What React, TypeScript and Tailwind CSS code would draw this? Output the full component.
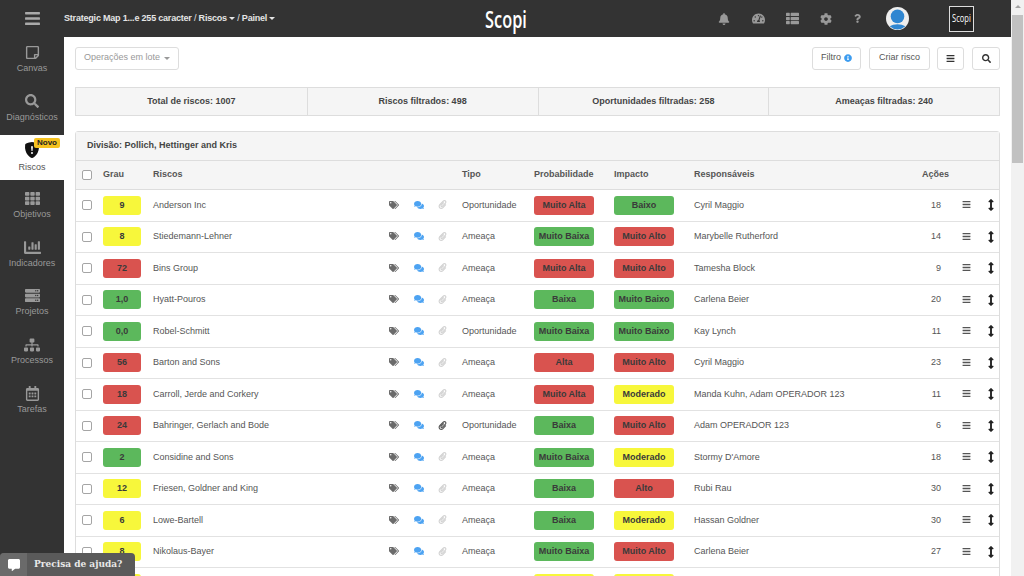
import type { ReactNode } from "react";
import { FaArrowsAltV, FaBars, FaBell, FaChartBar, FaCog, FaCommentAlt, FaComments, FaInfoCircle, FaPaperclip, FaQuestion, FaRegCalendarAlt, FaRegStickyNote, FaSearch, FaServer, FaSitemap, FaTachometerAlt, FaTags, FaTh, FaThList } from "react-icons/fa";
import { BsShieldFillExclamation } from "react-icons/bs";

type Level = "red" | "green" | "yellow";

const levelClass: Record<Level, string> = {
  red: "bg-[#d9534f]",
  green: "bg-[#5cb85c]",
  yellow: "bg-[#f7f73b]",
};

type Row = {
  grau: string;
  grauLevel: Level;
  nome: string;
  tipo: string;
  prob: [string, Level];
  imp: [string, Level];
  resp: string;
  acoes: number;
  clip?: boolean;
};

const rows: Row[] = [
  { grau: "9", grauLevel: "yellow", nome: "Anderson Inc", tipo: "Oportunidade", prob: ["Muito Alta", "red"], imp: ["Baixo", "green"], resp: "Cyril Maggio", acoes: 18 },
  { grau: "8", grauLevel: "yellow", nome: "Stiedemann-Lehner", tipo: "Ameaça", prob: ["Muito Baixa", "green"], imp: ["Muito Alto", "red"], resp: "Marybelle Rutherford", acoes: 14 },
  { grau: "72", grauLevel: "red", nome: "Bins Group", tipo: "Ameaça", prob: ["Muito Alta", "red"], imp: ["Muito Alto", "red"], resp: "Tamesha Block", acoes: 9 },
  { grau: "1,0", grauLevel: "green", nome: "Hyatt-Pouros", tipo: "Ameaça", prob: ["Baixa", "green"], imp: ["Muito Baixo", "green"], resp: "Carlena Beier", acoes: 20 },
  { grau: "0,0", grauLevel: "green", nome: "Robel-Schmitt", tipo: "Oportunidade", prob: ["Muito Baixa", "green"], imp: ["Muito Baixo", "green"], resp: "Kay Lynch", acoes: 11 },
  { grau: "56", grauLevel: "red", nome: "Barton and Sons", tipo: "Ameaça", prob: ["Alta", "red"], imp: ["Muito Alto", "red"], resp: "Cyril Maggio", acoes: 23 },
  { grau: "18", grauLevel: "red", nome: "Carroll, Jerde and Corkery", tipo: "Ameaça", prob: ["Muito Alta", "red"], imp: ["Moderado", "yellow"], resp: "Manda Kuhn, Adam OPERADOR 123", acoes: 11 },
  { grau: "24", grauLevel: "red", nome: "Bahringer, Gerlach and Bode", tipo: "Oportunidade", prob: ["Baixa", "green"], imp: ["Muito Alto", "red"], resp: "Adam OPERADOR 123", acoes: 6, clip: true },
  { grau: "2", grauLevel: "green", nome: "Considine and Sons", tipo: "Ameaça", prob: ["Muito Baixa", "green"], imp: ["Moderado", "yellow"], resp: "Stormy D'Amore", acoes: 18 },
  { grau: "12", grauLevel: "yellow", nome: "Friesen, Goldner and King", tipo: "Ameaça", prob: ["Baixa", "green"], imp: ["Alto", "red"], resp: "Rubi Rau", acoes: 30 },
  { grau: "6", grauLevel: "yellow", nome: "Lowe-Bartell", tipo: "Ameaça", prob: ["Baixa", "green"], imp: ["Moderado", "yellow"], resp: "Hassan Goldner", acoes: 30 },
  { grau: "8", grauLevel: "yellow", nome: "Nikolaus-Bayer", tipo: "Ameaça", prob: ["Muito Baixa", "green"], imp: ["Muito Alto", "red"], resp: "Carlena Beier", acoes: 27 },
];

const navItems = [
  { label: "Canvas", icon: <FaRegStickyNote className="size-[15px]" /> },
  { label: "Diagnósticos", icon: <FaSearch className="size-[14px]" /> },
  { label: "Riscos", icon: <BsShieldFillExclamation className="size-[16px] text-[#111]" />, active: true },
  { label: "Objetivos", icon: <FaTh className="size-[15px]" /> },
  { label: "Indicadores", icon: <FaChartBar className="size-[17px]" /> },
  { label: "Projetos", icon: <FaServer className="size-[15px]" /> },
  { label: "Processos", icon: <FaSitemap className="size-[16px]" /> },
  { label: "Tarefas", icon: <FaRegCalendarAlt className="size-[15px]" /> },
];

const rowGrid = "grid grid-cols-[27px_50px_232px_77px_72px_80px_80px_226px_30px_32px_1fr] items-center";

function Caret({ className = "ml-1" }: { className?: string }) {
  return <span className={`inline-block border-x-[3px] border-t-[3px] border-x-transparent border-t-current align-middle ${className}`} />;
}

function Checkbox() {
  return (
    <div className="pl-[6px]">
      <span className="block size-[10px] rounded-[2px] border border-[#a5a5a5] bg-white" />
    </div>
  );
}

function Pill({ text, level }: { text: string; level: Level }) {
  return (
    <span className={`flex h-[19px] w-[60px] items-center justify-center rounded-[3px] font-bold text-[#3a3a3a] ${levelClass[level]}`}>
      {text}
    </span>
  );
}

function Button({ children, className = "" }: { children: ReactNode; className?: string }) {
  return (
    <span className={`flex h-[23px] items-center justify-center rounded-[3px] border border-[#ddd] bg-white text-[#555] ${className}`}>
      {children}
    </span>
  );
}

export default function App() {
  return (
    <div className="relative flex h-[576px] w-[1024px] overflow-hidden bg-white font-['Liberation_Sans',Arial,sans-serif] text-[9px] text-[#555]">
      <div className="flex w-[1011px] flex-col">
        <header className="flex h-[37px] shrink-0 items-center bg-[#333]">
          <div className="flex w-[64px] justify-center">
            <FaBars className="size-[17px] text-[#aaa]" />
          </div>
          <div className="w-[364px] whitespace-nowrap font-bold tracking-[-0.2px] text-[#e5e5e5]">
            Strategic Map 1...e 255 caracter <span className="font-normal">/</span> Riscos<Caret className="ml-[2px]" /> <span className="font-normal">/</span> Painel<Caret className="ml-[2px]" />
          </div>
          <div className="w-[156px] text-center font-['Open_Sans',sans-serif] text-[24px] font-semibold leading-none text-white [transform:scaleX(0.68)]">Scopi</div>
          <div className="flex items-center text-[#999]">
            <FaBell className="ml-[134px] size-[12px]" />
            <FaTachometerAlt className="ml-[22px] size-[13px]" />
            <FaThList className="ml-[21px] size-[13px]" />
            <FaCog className="ml-[21px] size-[12px]" />
            <FaQuestion className="ml-[21px] size-[9px]" />
            <svg className="ml-[24px] size-[23px]" viewBox="0 0 22 22">
              <circle cx="11" cy="11" r="11" fill="#eee" />
              <circle cx="11" cy="9" r="6.5" fill="#2f86d1" />
              <path d="M3.5 18.5 a10 6 0 0 1 15 0 A11 11 0 0 1 3.5 18.5z" fill="#2f86d1" />
            </svg>
            <span className="ml-[40px] flex h-[26px] w-[25px] items-center justify-center border border-[#ddd] bg-[#222] font-['Open_Sans',sans-serif] text-[10px] text-white">
              <span className="[transform:scaleX(0.75)]">Scopi</span>
            </span>
          </div>
        </header>
        <div className="flex min-h-0 flex-1">
          <nav className="flex w-[64px] shrink-0 flex-col bg-[#333]">
            {navItems.map((n) => (
              <div
                key={n.label}
                className={
                  n.active
                    ? "relative mb-[3px] mt-[1px] flex h-[44.7px] flex-col items-center whitespace-nowrap bg-white pt-[7px] text-[#555]"
                    : "relative flex h-[48.7px] flex-col items-center whitespace-nowrap pt-[8px] text-[#999]"
                }
              >
                <div className="flex h-[15px] items-center">{n.icon}</div>
                <span className={n.active ? "mt-[4px]" : "mt-[2px]"}>{n.label}</span>
                {n.active && (
                  <span className="absolute left-[34px] top-[3px] rounded-[2px] bg-[#f5c21f] px-[3px] text-[8px] font-bold leading-[10px] text-[#222]">Novo</span>
                )}
              </div>
            ))}
          </nav>
          <main className="min-w-0 flex-1 overflow-hidden pl-[11px] pr-[11px] pt-[9.5px]">
            <div className="flex items-center gap-[8px]">
              <Button className="mr-auto w-[104px] text-[#999]">
                Operações em lote<Caret />
              </Button>
              <Button className="w-[49px]">
                Filtro
                <FaInfoCircle className="ml-[3px] size-[8px] text-[#3c9cf0]" />
              </Button>
              <Button className="w-[61px]">Criar risco</Button>
              <Button className="ml-[-1px] w-[27px]">
                <FaBars className="size-[9px] text-[#333]" />
              </Button>
              <Button className="w-[28px]">
                <FaSearch className="size-[9px] text-[#333]" />
              </Button>
            </div>
            <div className="mt-[17.5px] grid h-[29px] grid-cols-4 border border-[#ddd] bg-[#f5f5f5] font-bold text-[#444]">
              {["Total de riscos: 1007", "Riscos filtrados: 498", "Oportunidades filtradas: 258", "Ameaças filtradas: 240"].map((t, i) => (
                <div key={t} className={`flex items-center justify-center ${i > 0 ? "border-l border-[#ddd]" : ""}`}>
                  {t}
                </div>
              ))}
            </div>
            <section className="mt-[15px] rounded-t-[3px] border border-[#ddd]">
              <div className="flex h-[28px] items-center bg-[#f5f5f5] pb-[1px] pl-[11px] font-bold text-[#444]">Divisão: Pollich, Hettinger and Kris</div>
              <div className={`${rowGrid} h-[30px] border-y border-[#ddd] bg-[#f5f5f5] font-bold text-[#555]`}>
                <Checkbox />
                <div>Grau</div>
                <div>Riscos</div>
                <div />
                <div>Tipo</div>
                <div>Probabilidade</div>
                <div>Impacto</div>
                <div>Responsáveis</div>
                <div className="col-span-2 whitespace-nowrap pl-[2px]">Ações</div>
                <div />
              </div>
              {rows.map((r, i) => (
                <div key={i} className={`${rowGrid} h-[31.5px] border-b border-[#e2e2e2]`}>
                  <Checkbox />
                  <span className={`flex h-[19px] w-[38px] items-center justify-center rounded-[3px] font-bold text-[#3a3a3a] ${levelClass[r.grauLevel]}`}>{r.grau}</span>
                  <div className="whitespace-nowrap">{r.nome}</div>
                  <div className="flex items-center pb-[1px] pl-[4px]">
                    <FaTags className="size-[10px] text-[#6b6b6b]" />
                    <FaComments className="ml-[15px] size-[10px] text-[#4da3f2]" />
                    <FaPaperclip className={`ml-[14px] size-[9px] ${r.clip ? "text-[#555]" : "text-[#d2d2d2]"}`} />
                  </div>
                  <div>{r.tipo}</div>
                  <Pill text={r.prob[0]} level={r.prob[1]} />
                  <Pill text={r.imp[0]} level={r.imp[1]} />
                  <div className="whitespace-nowrap">{r.resp}</div>
                  <div className="pr-[9px] text-right">{r.acoes}</div>
                  <div className="flex justify-center pb-[1px]"><FaBars className="size-[9px] text-[#555]" /></div>
                  <div className="flex justify-center"><FaArrowsAltV className="size-[12px] text-[#222]" /></div>
                </div>
              ))}
              <div className={`${rowGrid} h-[31.5px]`}>
                <Checkbox />
                <span className={`h-[19px] w-[38px] rounded-[3px] ${levelClass.yellow}`} />
                <div />
                <div />
                <div />
                <span className={`h-[19px] w-[60px] rounded-[3px] ${levelClass.yellow}`} />
                <span className={`h-[19px] w-[60px] rounded-[3px] ${levelClass.yellow}`} />
              </div>
            </section>
          </main>
        </div>
      </div>
      <div className="flex w-[13px] shrink-0 flex-col items-center bg-[#f1f1f1]">
        <div className="flex h-[13px] items-center justify-center">
          <span className="border-x-[3px] border-b-[3px] border-x-transparent border-b-[#a3a3a3]" />
        </div>
        <div className="mt-[2px] h-[148px] w-[11px] bg-[#c1c1c1]" />
      </div>
      <div className="absolute bottom-0 left-0 flex h-[23px] w-[135px] items-center overflow-hidden rounded-t-[4px] bg-[#5a5a5a] font-['DejaVu_Serif',serif] text-[9px] font-bold text-[#e8e8e8]">
        <span className="flex h-full w-[27px] items-center justify-center bg-[#6a6a6a]">
          <FaCommentAlt className="size-[12px] text-white" />
        </span>
        <span className="pl-[7px]">Precisa de ajuda?</span>
      </div>
    </div>
  );
}
